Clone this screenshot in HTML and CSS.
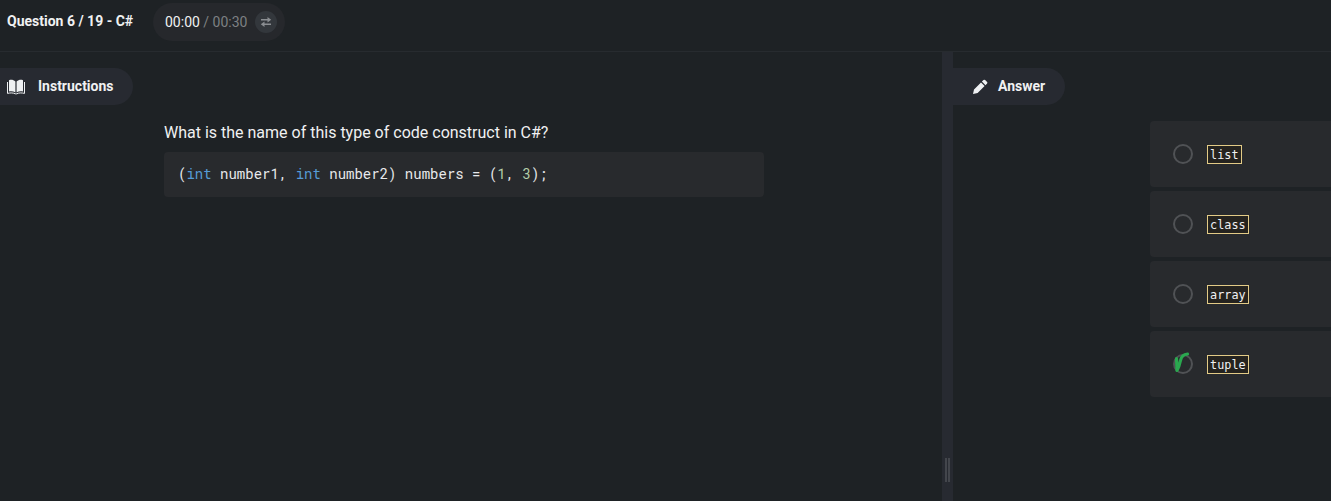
FILE: index.html
```html
<!DOCTYPE html>
<html lang="en">
<head>
<meta charset="utf-8">
<title>Question 6 / 19 - C#</title>
<link rel="stylesheet" href="styles.css">
</head>
<body>
<header class="topbar">
  <h1 class="title">Question 6 / 19 - C#</h1>
  <div class="timer">
    <span class="time"><span class="elapsed">00:00</span> / 00:30</span>
    <button class="swap" aria-label="Switch timer">
      <svg width="12" height="10" viewBox="0 0 12 10"><path d="M1 2H7.500V0L11.200 2.800 7.500 5.400V3.600H1zM11 6.400H4.500V4.600L.8 7.200 4.500 10V8H11z"/></svg>
    </button>
  </div>
</header>
<main class="panes">
  <section class="instructions">
    <h2 class="tab">
      <svg class="icon book" width="20" height="16" viewBox="0 0 20 16"><path d="M3 1.200C5.300.5 7.600.9 9.400 2.500V13.400C7.500 12.200 5.300 12 3 12.500zM10.600 2.500C12.400.9 14.700.5 17 1.200V12.500C14.700 12 12.500 12.200 10.600 13.400z"/><path class="cover" d="M1.500 3v11.400c3-.7 5.700-.7 7.700.4h1.600c2-1.100 4.700-1.100 7.700-.4V3"/></svg>
      <span>Instructions</span>
    </h2>
    <div class="question">
      <p class="prompt">What is the name of this type of code construct in C#?</p>
      <pre class="code">(<span class="type">int</span> number1, <span class="type">int</span> number2) numbers = (<span class="num">1</span>, <span class="num">3</span>);</pre>
    </div>
  </section>
  <div class="divider"><span class="grip"></span></div>
  <section class="answer">
    <h2 class="tab">
      <svg class="icon pencil" width="16" height="16" viewBox="0 0 16 16"><path d="M1 15l1-4.600L9 3.500l3.600 3.600-7 6.900zM9.900 2.600L11.500 1q.8-.7 1.600 0l2 2q.7.800 0 1.600l-1.600 1.600z"/></svg>
      <span>Answer</span>
    </h2>
    <div class="options">
      <label class="option"><span class="radio"></span><code class="label">list</code></label>
      <label class="option"><span class="radio"></span><code class="label">class</code></label>
      <label class="option"><span class="radio"></span><code class="label">array</code></label>
      <label class="option"><span class="radio"><svg class="mark" width="18" height="24" viewBox="0 0 18 24"><path d="M3.500 8.500L4 20.500C5.500 18 6.500 15 7.500 10.500C8.300 6.500 10.500 4.300 14.500 4"/></svg></span><code class="label">tuple</code></label>
    </div>
  </section>
</main>
</body>
</html>
```
FILE: styles.css
```css
* { box-sizing: border-box; }
body {
  margin: 0;
  height: 501px;
  overflow: hidden;
  display: flex;
  flex-direction: column;
  background: #1e2225;
  color: #f0f1f2;
  font-family: Roboto, sans-serif;
}
h1, h2, p, pre { margin: 0; }
.topbar {
  height: 52px;
  flex: none;
  display: flex;
  align-items: flex-start;
  gap: 20px;
  padding: 3px 0 0 7px;
  border-bottom: 1px solid #272b2f;
}
.title {
  width: 126px;
  font-size: 14px;
  font-weight: 700;
  line-height: 36px;
  white-space: nowrap;
}
.timer {
  width: 132px;
  height: 38px;
  display: flex;
  align-items: center;
  justify-content: space-between;
  padding: 0 8px 0 12px;
  border-radius: 19px;
  background: #26282c;
}
.time { font-size: 14px; color: #7d8083; white-space: nowrap; }
.elapsed { color: #f0f1f2; }
.swap {
  width: 22px;
  height: 22px;
  display: grid;
  place-items: center;
  padding: 0;
  border: 0;
  border-radius: 50%;
  background: #33373c;
  fill: #8b8e92;
}
.panes { flex: 1; display: flex; min-height: 0; }
.instructions { width: 942px; padding-top: 16px; }
.tab {
  height: 37px;
  display: flex;
  align-items: center;
  background: #272a31;
  border-radius: 0 19px 19px 0;
  font-size: 14px;
  font-weight: 700;
  line-height: 37px;
}
.icon { fill: #eef0f2; }
.instructions .tab { width: 133px; padding-left: 6px; gap: 12px; }
.answer .tab { width: 112px; padding-left: 19px; gap: 10px; }
.cover { fill: none; stroke: #eef0f2; stroke-width: 1; }
.question { width: 600px; margin: 18px 0 0 164px; }
.prompt { font-size: 16px; line-height: 20px; white-space: nowrap; }
.code {
  height: 45px;
  margin-top: 9px;
  padding: 0 14px;
  border-radius: 4px;
  background: #282a2d;
  color: #e8e9eb;
  font: 14px/43px "Roboto Mono", "DejaVu Sans Mono", monospace;
}
.type { color: #569cd6; }
.num { color: #b5cea8; }
.divider {
  width: 11px;
  display: flex;
  justify-content: center;
  align-items: flex-end;
  padding-bottom: 19px;
  background: #272a31;
}
.grip {
  width: 5px;
  height: 24px;
  border: solid #43464c;
  border-width: 0 2px;
}
.answer { flex: 1; padding-top: 16px; }
.options {
  display: flex;
  flex-direction: column;
  gap: 4px;
  margin: 16px 0 0 197px;
}
.option {
  height: 66px;
  display: flex;
  align-items: center;
  gap: 14px;
  padding-left: 23px;
  border-radius: 4px 0 0 4px;
  background: #282a2d;
}
.radio {
  position: relative;
  width: 20px;
  height: 20px;
  border: 2px solid #505255;
  border-radius: 50%;
}
.mark {
  position: absolute;
  left: -2px;
  top: -6px;
  fill: none;
  stroke: #2aa84f;
  stroke-width: 3.2;
  stroke-linecap: round;
  stroke-linejoin: round;
}
.label {
  height: 19px;
  margin-top: 1px;
  padding: 0 2px;
  border: 1px solid #e3cb86;
  background: #25231f;
  font: 11.8px/18px "DejaVu Sans Mono", monospace;
  letter-spacing: 0.05px;
}
```
